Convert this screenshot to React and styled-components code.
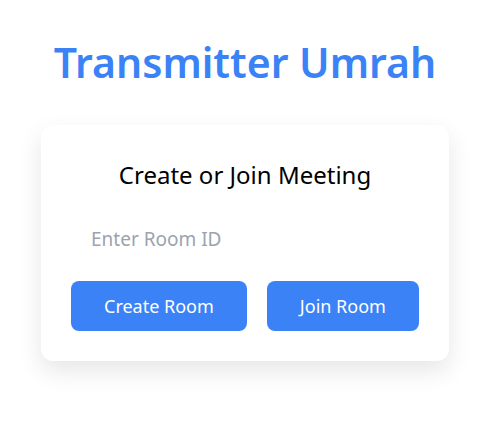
import React, { useState } from 'react';
import styled, { createGlobalStyle } from 'styled-components';

const GlobalStyle = createGlobalStyle`
  body {
    margin: 0;
    background: #ffffff;
    font-family: "Noto Sans", "Open Sans", sans-serif;
  }
`

const App = () => {
    const [roomId, setRoomId] = useState('')
    return (
        <Page>
            <GlobalStyle />
            <Title>Transmitter Umrah</Title>
            <Card>
                <Heading>Create or Join Meeting</Heading>
                <RoomInput
                    value={roomId}
                    onChange={e => setRoomId(e.target.value)}
                    placeholder="Enter Room ID"
                />
                <Actions>
                    <Button>Create Room</Button>
                    <Button>Join Room</Button>
                </Actions>
            </Card>
        </Page>
    )
}

export default App;

const Page = styled.div`
     display: flex;
     flex-direction: column;
     align-items: center;
     min-height: 100vh;
     padding: 0 10px 0 0;
     box-sizing: border-box;
`

const Title = styled.h1`
     margin: 34px 0 35px;
     font-size: 41px;
     line-height: 56px;
     font-weight: 600;
     color: #3b82f6;
`

const Card = styled.div`
     width: 408px;
     box-sizing: border-box;
     padding: 30px;
     background: #ffffff;
     border-radius: 12px;
     box-shadow: 0 10px 25px rgba(0, 0, 0, 0.1);
     display: flex;
     flex-direction: column;
`

const Heading = styled.h2`
     margin: 4px 0 23px;
     text-align: center;
     font-size: 24px;
     line-height: 32px;
     font-weight: 400;
     color: #000000;
`

const RoomInput = styled.input`
     font-family: inherit;
     font-size: 19px;
     line-height: 26px;
     padding: 12px 20px;
     border: none;
     outline: none;
     background: transparent;
     color: #111827;
     &::placeholder {
          color: #9ca3af;
     }
`

const Actions = styled.div`
     display: flex;
     gap: 20px;
     margin-top: 17px;
`

const Button = styled.button`
     height: 50px;
     padding: 0 33px;
     border: none;
     border-radius: 8px;
     background: #3b82f6;
     color: #ffffff;
     font-family: inherit;
     font-size: 18px;
     cursor: pointer;
`
